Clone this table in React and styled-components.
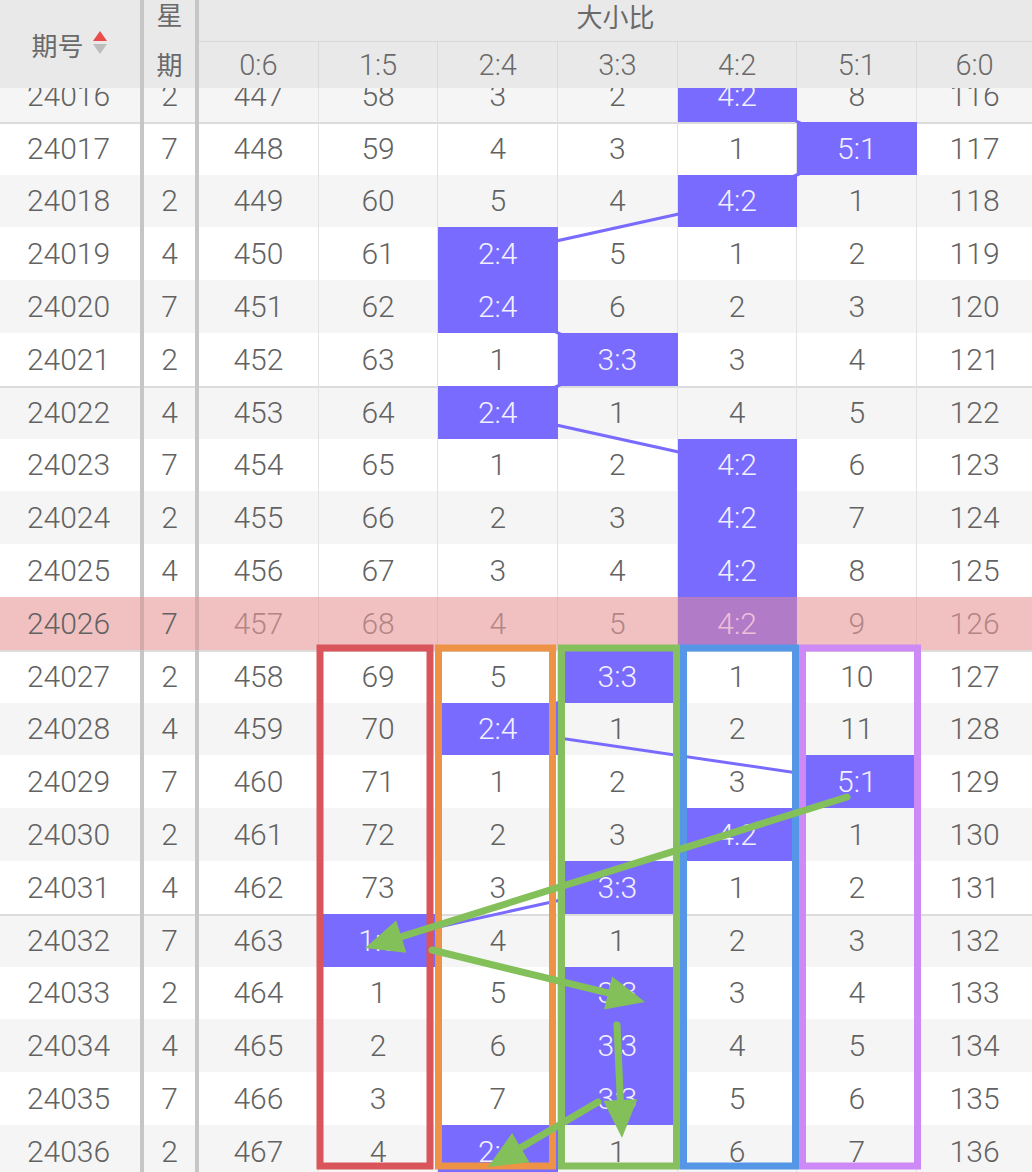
import React from "react";
import styled, { createGlobalStyle } from "styled-components";

const GlobalStyle = createGlobalStyle`
  html, body {
    margin: 0;
    padding: 0;
    background: #ffffff;
  }
  body {
    font-family: Roboto, "Noto Sans CJK SC", sans-serif;
    color: #666666;
  }
  * {
    box-sizing: border-box;
  }
`;

const COLS = "144px 55px repeat(6, 119.7px) 1fr";
const ROW_H = 52.8;
const COL_W = 119.7;
const DATA_X = 199;
const HIDDEN_TOP = 19;

const LABELS = ["0:6", "1:5", "2:4", "3:3", "4:2", "5:1", "6:0"];

// [期号, 星期, 数值(命中位置为 null)]
const ROWS = [
  ["24016", 2, [447, 58, 3, 2, null, 8, 116]],
  ["24017", 7, [448, 59, 4, 3, 1, null, 117]],
  ["24018", 2, [449, 60, 5, 4, null, 1, 118]],
  ["24019", 4, [450, 61, null, 5, 1, 2, 119]],
  ["24020", 7, [451, 62, null, 6, 2, 3, 120]],
  ["24021", 2, [452, 63, 1, null, 3, 4, 121]],
  ["24022", 4, [453, 64, null, 1, 4, 5, 122]],
  ["24023", 7, [454, 65, 1, 2, null, 6, 123]],
  ["24024", 2, [455, 66, 2, 3, null, 7, 124]],
  ["24025", 4, [456, 67, 3, 4, null, 8, 125]],
  ["24026", 7, [457, 68, 4, 5, null, 9, 126]],
  ["24027", 2, [458, 69, 5, null, 1, 10, 127]],
  ["24028", 4, [459, 70, null, 1, 2, 11, 128]],
  ["24029", 7, [460, 71, 1, 2, 3, null, 129]],
  ["24030", 2, [461, 72, 2, 3, null, 1, 130]],
  ["24031", 4, [462, 73, 3, null, 1, 2, 131]],
  ["24032", 7, [463, null, 4, 1, 2, 3, 132]],
  ["24033", 2, [464, 1, 5, null, 3, 4, 133]],
  ["24034", 4, [465, 2, 6, null, 4, 5, 134]],
  ["24035", 7, [466, 3, 7, null, 5, 6, 135]],
  ["24036", 2, [467, 4, null, 1, 6, 7, 136]],
];

const HOT_ROW = "24026";

const Page = styled.div`
  position: relative;
  width: 1032px;
  height: 1172px;
  overflow: hidden;
  background: #ffffff;
`;

const Header = styled.div`
  display: grid;
  grid-template-columns: ${COLS};
  grid-template-rows: 42px 46px;
  height: 88px;
  background: #e9e9e9;
  color: #6a6a6a;
`;

const IssueHead = styled.div`
  grid-row: 1 / span 2;
  display: flex;
  align-items: center;
  justify-content: center;
  gap: 9px;
  border-right: 4px solid #c6c6c6;
  font-size: 26px;
  padding-right: 2px;
`;

const SortIcon = styled.span`
  display: flex;
  flex-direction: column;
  gap: 3px;
  margin-top: -4px;
  &::before,
  &::after {
    content: "";
    width: 0;
    height: 0;
    border-left: 7.5px solid transparent;
    border-right: 7.5px solid transparent;
  }
  &::before {
    border-bottom: 10px solid #ea4c4c;
  }
  &::after {
    border-top: 10px solid #bdbdbd;
  }
`;

const WeekHead = styled.div`
  grid-row: 1 / span 2;
  border-right: 4px solid #c6c6c6;
  display: flex;
  justify-content: center;
  align-items: flex-start;
  font-size: 26px;
  overflow: hidden;
`;

const WeekText = styled.span`
  display: block;
  width: 27px;
  line-height: 50px;
  margin-top: -9px;
  text-align: center;
`;

const GroupHead = styled.div`
  grid-column: 3 / -1;
  display: flex;
  align-items: center;
  justify-content: center;
  border-bottom: 1px solid #d6d6d6;
  font-size: 26px;
  line-height: 1;
  padding-bottom: 6px;
`;

const RatioHead = styled.div`
  display: flex;
  align-items: center;
  justify-content: center;
  font-size: 29px;
  line-height: 1;
  font-weight: 300;
  padding-top: 1px;
  border-right: ${(p) => (p.$last ? "none" : "1px solid #d9d9d9")};
`;

const Body = styled.div`
  height: ${1172 - 88}px;
  overflow: hidden;
`;

const BodyInner = styled.div`
  position: relative;
  margin-top: -${HIDDEN_TOP}px;
`;

const Row = styled.div`
  display: grid;
  grid-template-columns: ${COLS};
  height: ${ROW_H}px;
  background: ${(p) => (p.$hot ? "#f1c1c1" : p.$stripe ? "#f5f5f5" : "#ffffff")};
  box-shadow: ${(p) => (p.$major ? "inset 0 2px 0 #dcdcdc" : "none")};
  font-size: 30px;
  font-weight: 300;
`;

const Cell = styled.div`
  display: flex;
  align-items: center;
  justify-content: center;
  color: #626262;
`;

const IssueCell = styled(Cell)`
  border-right: 4px solid ${(p) => (p.$hot ? "#d3a9a9" : "#c6c6c6")};
  padding-right: 3px;
`;

const WeekCell = styled(Cell)`
  border-right: 4px solid ${(p) => (p.$hot ? "#d3a9a9" : "#c6c6c6")};
`;

const DataCell = styled(Cell)`
  border-right: ${(p) =>
    p.$last ? "none" : `1px solid ${p.$hot ? "#e4b6b6" : "#e2e2e2"}`};
  color: ${(p) => (p.$hot ? "#b38585" : "#626262")};
  ${(p) =>
    p.$on &&
    `
    position: relative;
    z-index: 2;
    background: ${p.$hot ? "#b27bc7" : "#7a6bff"};
    color: ${p.$hot ? "#efbfd9" : "#f3f1ff"};
    border-right-color: transparent;
  `}
`;

const TrendLayer = styled.svg`
  position: absolute;
  top: 0;
  left: 0;
  z-index: 1;
  pointer-events: none;
`;

const MarkLayer = styled.svg`
  position: absolute;
  top: 0;
  left: 0;
  z-index: 5;
  pointer-events: none;
`;

const hitIndex = (vals) => vals.findIndex((v) => v === null);
const colCenter = (i) => DATA_X + COL_W * i + COL_W / 2;
const rowCenter = (k) => ROW_H * k + ROW_H / 2;

function Trend() {
  const pts = ROWS.map((r, k) => [colCenter(hitIndex(r[2])), rowCenter(k)]);
  return (
    <TrendLayer width="1032" height={ROWS.length * ROW_H}>
      <polyline
        points={pts.map((p) => p.join(",")).join(" ")}
        fill="none"
        stroke="#7a6bff"
        strokeWidth="3"
      />
    </TrendLayer>
  );
}

const BOXES = [
  { x: 320, w: 110, c: "#da545b" },
  { x: 438.5, w: 114, c: "#ee9246" },
  { x: 561.5, w: 115, c: "#86bf5d" },
  { x: 683.5, w: 112, c: "#5596e6" },
  { x: 802.5, w: 115, c: "#cd89f5" },
];

const ARROWS = [
  [847, 797, 365, 948],
  [432, 950, 645, 1002],
  [617, 1025, 622, 1138],
  [598, 1102, 488, 1167],
];

function Arrow({ a }) {
  const [x1, y1, x2, y2] = a;
  const len = Math.hypot(x2 - x1, y2 - y1);
  const ux = (x2 - x1) / len;
  const uy = (y2 - y1) / len;
  const L = 38;
  const W = 17;
  const bx = x2 - ux * L;
  const by = y2 - uy * L;
  const head = [
    [x2, y2],
    [bx - uy * W, by + ux * W],
    [bx + uy * W, by - ux * W],
  ];
  return (
    <g>
      <line
        x1={x1}
        y1={y1}
        x2={bx + ux * 4}
        y2={by + uy * 4}
        stroke="#84c05a"
        strokeWidth="7"
        strokeLinecap="round"
      />
      <polygon points={head.map((p) => p.join(",")).join(" ")} fill="#84c05a" />
    </g>
  );
}

function Marks() {
  return (
    <MarkLayer width="1032" height="1172">
      {BOXES.map((b) => (
        <rect
          key={b.x}
          x={b.x}
          y="648"
          width={b.w}
          height="518"
          fill="none"
          stroke={b.c}
          strokeWidth="7"
        />
      ))}
      {ARROWS.map((a, i) => (
        <Arrow key={i} a={a} />
      ))}
    </MarkLayer>
  );
}

export default function App() {
  return (
    <Page>
      <GlobalStyle />
      <Header>
        <IssueHead>
          期号
          <SortIcon />
        </IssueHead>
        <WeekHead>
          <WeekText>星期</WeekText>
        </WeekHead>
        <GroupHead>大小比</GroupHead>
        {LABELS.map((l, i) => (
          <RatioHead key={l} $last={i === LABELS.length - 1}>
            {l}
          </RatioHead>
        ))}
      </Header>
      <Body>
        <BodyInner>
          {ROWS.map(([id, week, vals], k) => {
            const hot = id === HOT_ROW;
            return (
              <Row key={id} $stripe={k % 2 === 0} $hot={hot} $major={k % 5 === 1}>
                <IssueCell $hot={hot}>{id}</IssueCell>
                <WeekCell $hot={hot}>{week}</WeekCell>
                {vals.map((v, i) => (
                  <DataCell
                    key={i}
                    $on={v === null}
                    $hot={hot}
                    $last={i === vals.length - 1}
                  >
                    {v === null ? LABELS[i] : v}
                  </DataCell>
                ))}
              </Row>
            );
          })}
          <Trend />
        </BodyInner>
      </Body>
      <Marks />
    </Page>
  );
}
